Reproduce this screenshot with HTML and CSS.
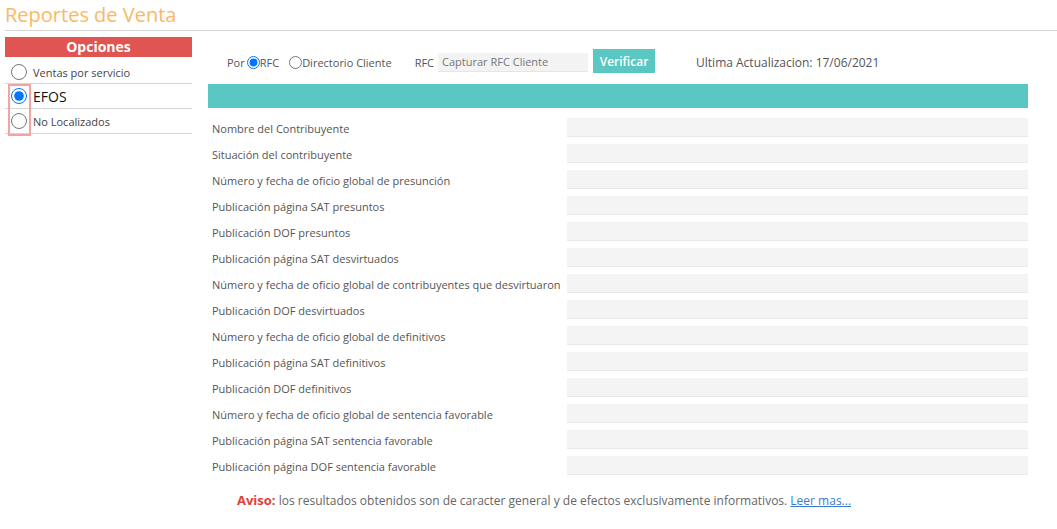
FILE: index.html
```html
<!DOCTYPE html>
<html lang="es">
<head>
  <meta charset="UTF-8" />
  <meta name="viewport" content="width=device-width, initial-scale=1.0" />
  <title>Reportes de Venta</title>
  <link rel="stylesheet" href="styles.css">
</head>
<body>

<h1 class="page-title">Reportes de Venta</h1>

<div class="layout">

  <!-- menu de opciones -->
  <div class="sidebar">
    <div class="sidebar-head">Opciones</div>
    <div class="option-list">
      <label class="option"><input type="radio" name="opcion"> Ventas por servicio</label>
      <label class="option big"><input type="radio" name="opcion" checked> EFOS</label>
      <label class="option"><input type="radio" name="opcion"> No Localizados</label>
      <div class="highlight"></div>
    </div>
  </div>

  <div class="main">
    <div class="search-bar">
      <span class="by">Por</span>
      <label class="by-opt"><input type="radio" name="por" checked>RFC</label>
      <label class="by-opt"><input type="radio" name="por">Directorio Cliente</label>
      <span class="rfc-label">RFC</span>
      <input class="rfc-input" type="text" placeholder="Capturar RFC Cliente">
      <button class="btn-verify">Verificar</button>
      <span class="updated">Ultima Actualizacion: 17/06/2021</span>
    </div>

    <div class="result-bar"></div>

    <div class="result-grid" id="resultGrid"></div>

    <p class="notice"><b>Aviso:</b> los resultados obtenidos son de caracter general y de efectos exclusivamente informativos. <a href="#">Leer mas...</a></p>
  </div>

</div>

<script>
  const campos = [
    "Nombre del Contribuyente",
    "Situación del contribuyente",
    "Número y fecha de oficio global de presunción",
    "Publicación página SAT presuntos",
    "Publicación DOF presuntos",
    "Publicación página SAT desvirtuados",
    "Número y fecha de oficio global de contribuyentes que desvirtuaron",
    "Publicación DOF desvirtuados",
    "Número y fecha de oficio global de definitivos",
    "Publicación página SAT definitivos",
    "Publicación DOF definitivos",
    "Número y fecha de oficio global de sentencia favorable",
    "Publicación página SAT sentencia favorable",
    "Publicación página DOF sentencia favorable"
  ];

  const grid = document.getElementById('resultGrid');
  campos.forEach(c => {
    const label = document.createElement('div');
    label.className = 'field-label';
    label.textContent = c;
    const value = document.createElement('div');
    value.className = 'field-value';
    grid.appendChild(label);
    grid.appendChild(value);
  });
</script>

</body>
</html>
```

FILE: styles.css
```css
body {
  margin: 0;
  font-family: "Open Sans", "Liberation Sans", sans-serif;
  color: #555;
  background: white;
}

.page-title {
  margin: 0 0 0 5px;
  font-size: 20px;
  font-weight: normal;
  line-height: 30px;
  height: 30px;
  color: #fbb862;
  border-bottom: 1px solid #d6d6d6;
}

.layout {
  display: flex;
  padding-top: 6px;
}

.sidebar {
  width: 187px;
  margin-left: 5px;
}

.sidebar-head {
  background: #e05552;
  color: white;
  font-weight: bold;
  font-size: 14px;
  height: 20px;
  line-height: 20px;
  text-align: center;
}

.option-list {
  position: relative;
}

.option {
  display: flex;
  align-items: center;
  gap: 6px;
  height: 24px;
  padding-left: 6px;
  border-bottom: 1px solid #d6d6d6;
  font-size: 11px;
  color: #444;
}

.option:first-child {
  height: 22px;
  padding-top: 4px;
}

.option.big {
  font-size: 14px;
  color: #111;
}

.option input {
  width: 16px;
  height: 16px;
  margin: 0;
}

.highlight {
  position: absolute;
  left: 3px;
  top: 27px;
  width: 19px;
  height: 48px;
  border: 2px solid #f4a3a3;
}

.main {
  margin-left: 16px;
  width: 820px;
}

.search-bar {
  display: flex;
  align-items: center;
  height: 26px;
  padding-top: 12px;
  padding-left: 19px;
  font-size: 11px;
  color: #555;
}

.by-opt {
  display: flex;
  align-items: center;
}

.by-opt input {
  margin: 0 0 0 2px;
  width: 13px;
  height: 13px;
}

.by-opt + .by-opt {
  margin-left: 8px;
}

.rfc-label {
  margin-left: 23px;
  margin-right: 4px;
}

.rfc-input {
  width: 150px;
  height: 19px;
  box-sizing: border-box;
  border: none;
  border-bottom: 1px solid #e6e6e6;
  background: #f3f3f3;
  font-family: inherit;
  font-size: 11px;
  padding: 0 4px;
  color: #555;
}

.rfc-input::placeholder {
  color: #777;
}

.btn-verify {
  margin-left: 5px;
  width: 62px;
  height: 24px;
  border: none;
  background: #5bc7c3;
  color: white;
  font-family: inherit;
  font-weight: 600;
  font-size: 12px;
  padding: 0;
  margin-top: -2px;
}

.updated {
  margin-left: 41px;
  font-size: 12px;
}

.result-bar {
  height: 24px;
  margin-top: 9px;
  background: #5bc7c3;
}

.result-grid {
  display: grid;
  grid-template-columns: 359px 1fr;
  row-gap: 7px;
  margin-top: 10px;
}

.field-label {
  height: 19px;
  line-height: 21px;
  padding-left: 4px;
  font-size: 11px;
  color: #555;
}

.field-value {
  height: 19px;
  box-sizing: border-box;
  background: #f4f4f4;
  border-bottom: 1px solid #e8e8e8;
}

.notice {
  margin: 16px 0 0;
  padding-left: 29px;
  font-size: 12px;
  color: #666;
}

.notice b {
  color: #e0413b;
  font-size: 13px;
}

.notice a {
  color: #3a7bd5;
}
```
